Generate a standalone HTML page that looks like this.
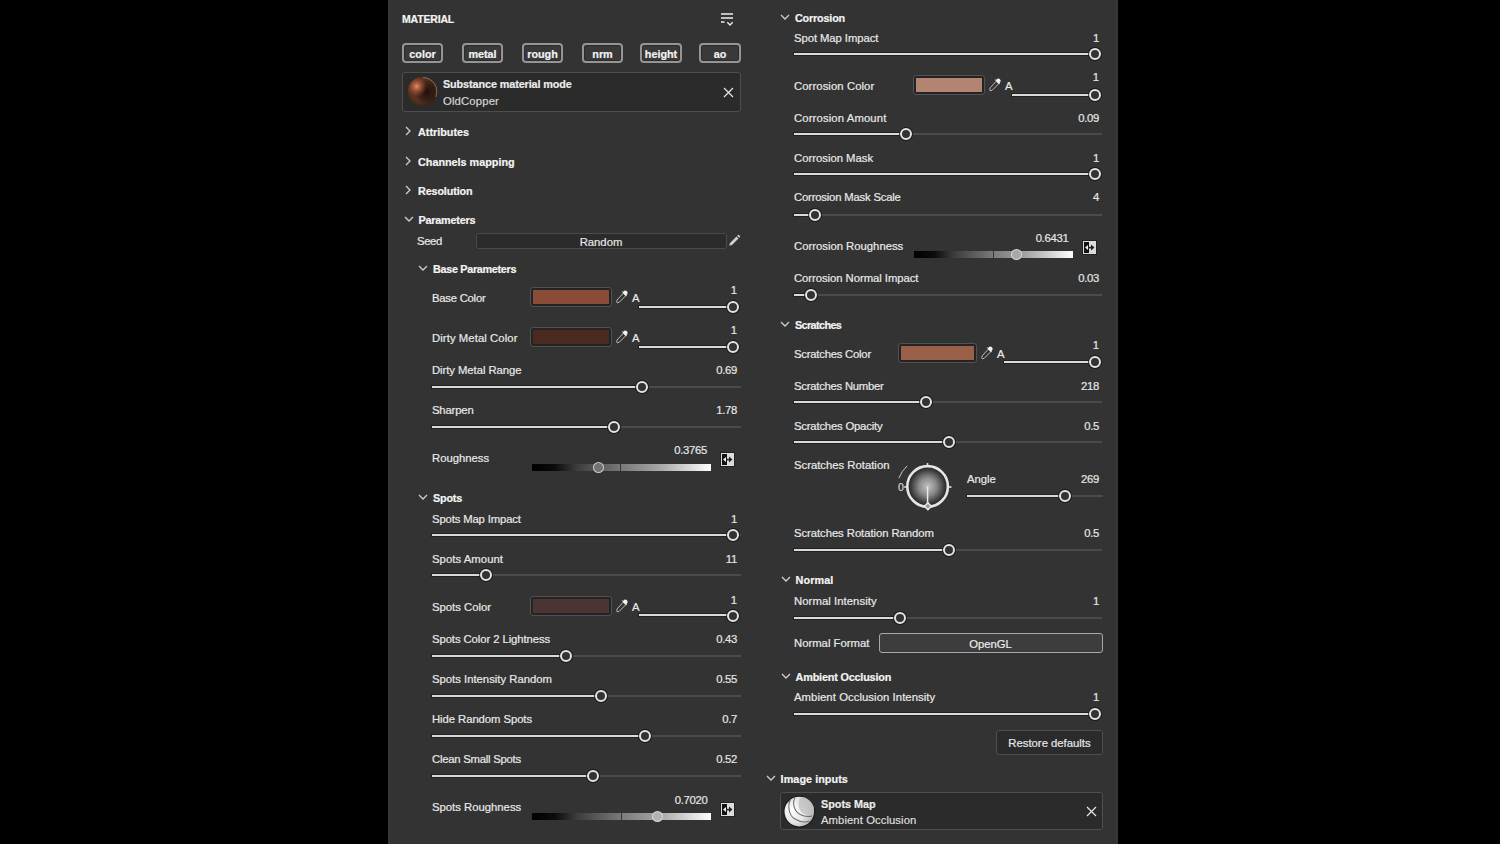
<!DOCTYPE html>
<html><head><meta charset="utf-8"><title>Material</title>
<style>
html,body{margin:0;padding:0;background:#000;width:1500px;height:844px;overflow:hidden}
#p{position:absolute;left:388px;top:0;width:730px;height:844px;background:#333333}
#p:before{content:"";position:absolute;left:1px;top:0;width:1px;height:844px;background:#393939}
#p:after{content:"";position:absolute;left:728px;top:0;width:1px;height:844px;background:#393939}
.t{position:absolute;white-space:nowrap;line-height:20px;font-family:"Liberation Sans",sans-serif;-webkit-text-stroke:0.2px currentColor}
.a{position:absolute}
.knob{position:absolute;width:12px;height:12px;border-radius:50%;box-sizing:border-box;border:2px solid #e4e4e4;background:#333;box-shadow:0 0 0 1px rgba(20,20,20,0.8)}
.sw{position:absolute;box-sizing:border-box;border:1px solid #525252;border-radius:3px;background:#242424}
.btn{position:absolute;box-sizing:border-box;border:2px solid #959595;border-radius:4px;background:#393939;box-shadow:inset 0 0 0 1px #2c2c2c}
.card{position:absolute;box-sizing:border-box;border:1px solid #4e4e4e;border-radius:3px;background:#2b2b2b}
.field{position:absolute;box-sizing:border-box;border:1px solid #4a4a4a;border-radius:3px;background:#2b2b2b}
.dd{position:absolute;box-sizing:border-box;border:1.5px solid #a8a8a8;border-radius:3px;background:#3d3d3d}
</style></head><body>
<div id="p"></div>
<div class="t" style="left:402px;top:9px;font-size:10.5px;font-weight:700;color:#f4f4f4;letter-spacing:-0.171px;">MATERIAL</div>
<svg class="a" style="left:719px;top:11px" width="16" height="16" viewBox="0 0 16 16"><path d="M2 3 H14 M2 7 H14 M2 11 H5.5" stroke="#eee" stroke-width="1.6"/><path d="M8.3 11.2 L11 13.9 L13.7 11.2" fill="none" stroke="#eee" stroke-width="1.4"/></svg>
<div class="btn" style="left:402px;top:43px;width:41px;height:20px"></div>
<div class="t" style="left:322.5px;width:200px;top:44px;font-size:10.8px;font-weight:700;color:#f2f2f2;text-align:center;">color</div>
<div class="btn" style="left:462px;top:43px;width:41px;height:20px"></div>
<div class="t" style="left:382.5px;width:200px;top:44px;font-size:10.8px;font-weight:700;color:#f2f2f2;text-align:center;">metal</div>
<div class="btn" style="left:522px;top:43px;width:41px;height:20px"></div>
<div class="t" style="left:442.5px;width:200px;top:44px;font-size:10.8px;font-weight:700;color:#f2f2f2;text-align:center;">rough</div>
<div class="btn" style="left:582px;top:43px;width:41px;height:20px"></div>
<div class="t" style="left:502.5px;width:200px;top:44px;font-size:10.8px;font-weight:700;color:#f2f2f2;text-align:center;">nrm</div>
<div class="btn" style="left:640px;top:43px;width:42px;height:20px"></div>
<div class="t" style="left:561.0px;width:200px;top:44px;font-size:10.8px;font-weight:700;color:#f2f2f2;text-align:center;">height</div>
<div class="btn" style="left:699px;top:43px;width:42px;height:20px"></div>
<div class="t" style="left:620.0px;width:200px;top:44px;font-size:10.8px;font-weight:700;color:#f2f2f2;text-align:center;">ao</div>
<div class="card" style="left:402px;top:72px;width:339px;height:40px"></div>
<svg class="a" style="left:406px;top:75px" width="33" height="33" viewBox="0 0 33 33"><defs><radialGradient id="cu1" cx="0.4" cy="0.45" r="0.6"><stop offset="0" stop-color="#6e3a28"/><stop offset="0.7" stop-color="#52301f"/><stop offset="1" stop-color="#3a2016"/></radialGradient><radialGradient id="cu2" cx="0.3" cy="0.33" r="0.36"><stop offset="0" stop-color="#e88a6a" stop-opacity="1"/><stop offset="0.45" stop-color="#a85a3c" stop-opacity="0.75"/><stop offset="1" stop-color="#8a4028" stop-opacity="0"/></radialGradient><radialGradient id="cu3" cx="0.64" cy="0.52" r="0.42"><stop offset="0" stop-color="#1e0e0a" stop-opacity="0.95"/><stop offset="0.6" stop-color="#24120c" stop-opacity="0.6"/><stop offset="1" stop-color="#1e0e0a" stop-opacity="0"/></radialGradient></defs><circle cx="16.5" cy="16.3" r="14.5" fill="url(#cu1)"/><circle cx="16.5" cy="16.3" r="14.5" fill="url(#cu3)"/><circle cx="16.5" cy="16.3" r="14.5" fill="url(#cu2)"/><path d="M17 2.6 A13.7 13.7 0 0 1 29.5 22" fill="none" stroke="#c89888" stroke-width="1" stroke-opacity="0.6"/></svg>
<div class="t" style="left:443px;top:74px;font-size:10.8px;font-weight:700;color:#ececec;letter-spacing:-0.09px;">Substance material mode</div>
<div class="t" style="left:443px;top:91px;font-size:11.3px;font-weight:400;color:#d6d6d6;letter-spacing:0.15px;">OldCopper</div>
<svg class="a" style="left:723.0px;top:86.5px" width="11" height="11" viewBox="0 0 11 11"><path d="M1 1 L10 10 M10 1 L1 10" stroke="#e6e6e6" stroke-width="1.2"/></svg>
<svg class="a" style="left:405px;top:126px" width="8" height="10" viewBox="0 0 8 10"><path d="M1 1 L5 5 L1 9" fill="none" stroke="#cfcfcf" stroke-width="1.3"/></svg>
<div class="t" style="left:418px;top:122px;font-size:10.8px;font-weight:700;color:#f4f4f4;">Attributes</div>
<svg class="a" style="left:405px;top:156px" width="8" height="10" viewBox="0 0 8 10"><path d="M1 1 L5 5 L1 9" fill="none" stroke="#cfcfcf" stroke-width="1.3"/></svg>
<div class="t" style="left:418px;top:152px;font-size:10.8px;font-weight:700;color:#f4f4f4;">Channels mapping</div>
<svg class="a" style="left:405px;top:185px" width="8" height="10" viewBox="0 0 8 10"><path d="M1 1 L5 5 L1 9" fill="none" stroke="#cfcfcf" stroke-width="1.3"/></svg>
<div class="t" style="left:418px;top:181px;font-size:10.8px;font-weight:700;color:#f4f4f4;letter-spacing:-0.133px;">Resolution</div>
<svg class="a" style="left:403.5px;top:216px" width="10" height="7" viewBox="0 0 10 7"><path d="M1 1 L5 5 L9 1" fill="none" stroke="#cfcfcf" stroke-width="1.3"/></svg>
<div class="t" style="left:418.5px;top:210px;font-size:10.8px;font-weight:700;color:#f4f4f4;letter-spacing:-0.2px;">Parameters</div>
<div class="t" style="left:417px;top:231px;font-size:11.3px;font-weight:400;color:#e9e9e9;letter-spacing:-0.4px;">Seed</div>
<div class="field" style="left:476px;top:233px;width:251px;height:16px"></div>
<div class="t" style="left:501px;width:200px;top:232px;font-size:11.3px;font-weight:400;color:#e6e6e6;text-align:center;">Random</div>
<svg class="a" style="left:727px;top:234px" width="14" height="14" viewBox="0 0 14 14"><path d="M3 9 L9.5 2.5 L11.5 4.5 L5 11 L2.3 11.7 Z" fill="#d0d0d0"/><path d="M10.2 1.8 L11 1 Q11.6 0.6 12.2 1.2 L12.8 1.8 Q13.3 2.4 12.9 3 L12.2 3.8 Z" fill="#d0d0d0"/></svg>
<svg class="a" style="left:418px;top:265px" width="10" height="7" viewBox="0 0 10 7"><path d="M1 1 L5 5 L9 1" fill="none" stroke="#cfcfcf" stroke-width="1.3"/></svg>
<div class="t" style="left:433px;top:259px;font-size:10.8px;font-weight:700;color:#f4f4f4;letter-spacing:-0.3px;">Base Parameters</div>
<div class="t" style="left:432px;top:288px;font-size:11.3px;font-weight:400;color:#e9e9e9;letter-spacing:-0.244px;">Base Color</div>
<div class="sw" style="left:530px;top:287px;width:82px;height:20px"><div style="position:absolute;left:2px;top:2px;right:2px;bottom:2px;background:#8a4c36"></div></div>
<svg class="a" style="left:615px;top:290px" width="14" height="14" viewBox="0 0 14 14"><path d="M8.2 3.3 L10.7 5.8 L4.2 12.3 L2.2 12.8 L1.7 11.8 L2.2 9.8 Z" fill="none" stroke="#bdbdbd" stroke-width="1"/><path d="M7.5 2.6 L9.3 0.8 Q10.6 0 11.9 1.3 Q13.2 2.6 12.4 3.9 L11.4 4.9 L12 5.5 L11.2 6.3 L6.7 1.8 L7.5 1 Z" fill="#f2f2f2"/></svg>
<div class="t" style="left:632px;top:288px;font-size:11.3px;font-weight:400;color:#e9e9e9;">A</div>
<div class="a" style="left:639px;top:306px;width:94px;height:2px;background:#dadada;box-shadow:0 0 0 1px rgba(0,0,0,0.35);"></div>
<div class="knob" style="left:727.0px;top:300.7px"></div>
<div class="t" style="right:763px;top:280px;font-size:11.3px;font-weight:400;color:#e6e6e6;text-align:right;">1</div>
<div class="t" style="left:432px;top:328px;font-size:11.3px;font-weight:400;color:#e9e9e9;letter-spacing:0.081px;">Dirty Metal Color</div>
<div class="sw" style="left:530px;top:327px;width:82px;height:20px"><div style="position:absolute;left:2px;top:2px;right:2px;bottom:2px;background:#4a2a20"></div></div>
<svg class="a" style="left:615px;top:330px" width="14" height="14" viewBox="0 0 14 14"><path d="M8.2 3.3 L10.7 5.8 L4.2 12.3 L2.2 12.8 L1.7 11.8 L2.2 9.8 Z" fill="none" stroke="#bdbdbd" stroke-width="1"/><path d="M7.5 2.6 L9.3 0.8 Q10.6 0 11.9 1.3 Q13.2 2.6 12.4 3.9 L11.4 4.9 L12 5.5 L11.2 6.3 L6.7 1.8 L7.5 1 Z" fill="#f2f2f2"/></svg>
<div class="t" style="left:632px;top:328px;font-size:11.3px;font-weight:400;color:#e9e9e9;">A</div>
<div class="a" style="left:639px;top:346px;width:94px;height:2px;background:#dadada;box-shadow:0 0 0 1px rgba(0,0,0,0.35);"></div>
<div class="knob" style="left:727.0px;top:340.7px"></div>
<div class="t" style="right:763px;top:320px;font-size:11.3px;font-weight:400;color:#e6e6e6;text-align:right;">1</div>
<div class="t" style="left:432px;top:360px;font-size:11.3px;font-weight:400;color:#e9e9e9;letter-spacing:-0.056px;">Dirty Metal Range</div>
<div class="t" style="right:763px;top:360px;font-size:11.3px;font-weight:400;color:#e6e6e6;text-align:right;letter-spacing:-0.3px">0.69</div>
<div class="a" style="left:432px;top:386px;width:210px;height:2px;background:#dadada;box-shadow:0 0 0 1px rgba(0,0,0,0.35);"></div>
<div class="a" style="left:642px;top:386px;width:99px;height:2px;background:#4b4b4b;"></div>
<div class="knob" style="left:635.8px;top:380.9px"></div>
<div class="t" style="left:432px;top:400px;font-size:11.3px;font-weight:400;color:#e9e9e9;letter-spacing:-0.167px;">Sharpen</div>
<div class="t" style="right:763px;top:400px;font-size:11.3px;font-weight:400;color:#e6e6e6;text-align:right;letter-spacing:-0.3px">1.78</div>
<div class="a" style="left:432px;top:426px;width:182px;height:2px;background:#dadada;box-shadow:0 0 0 1px rgba(0,0,0,0.35);"></div>
<div class="a" style="left:614px;top:426px;width:127px;height:2px;background:#4b4b4b;"></div>
<div class="knob" style="left:608.3px;top:421.0px"></div>
<div class="t" style="left:432px;top:448px;font-size:11.3px;font-weight:400;color:#e9e9e9;">Roughness</div>
<div class="a" style="left:532px;top:464px;width:179px;height:7px;background:linear-gradient(90deg,#000 0%,#0c0c0c 13%,#3c3c3c 25%,#7a7a7a 50%,#a8a8a8 72%,#fff 100%)"></div>
<div class="a" style="left:620px;top:464px;width:1px;height:7px;background:rgba(40,40,40,0.8)"></div>
<div class="a" style="left:593.0px;top:462.0px;width:11px;height:11px;border-radius:50%;box-sizing:border-box;border:1.5px solid rgba(225,225,225,0.8);background:rgb(114,114,114)"></div>
<div class="t" style="right:793px;top:440px;font-size:11.3px;font-weight:400;color:#e6e6e6;text-align:right;letter-spacing:-0.3px">0.3765</div>
<svg class="a" style="left:719.5px;top:452px" width="15" height="15" viewBox="0 0 15 15"><rect x="0.5" y="0.5" width="14" height="14" fill="#dcdcdc" stroke="#222" stroke-width="1"/><rect x="2" y="2" width="5" height="11" fill="#111"/><path d="M3 7.5 L6 5 L6 10 Z" fill="#eee"/><path d="M12.5 7.5 L9 4.5 L9 10.5 Z" fill="#222"/><rect x="6" y="6.8" width="4" height="1.6" fill="#222"/></svg>
<svg class="a" style="left:418px;top:494px" width="10" height="7" viewBox="0 0 10 7"><path d="M1 1 L5 5 L9 1" fill="none" stroke="#cfcfcf" stroke-width="1.3"/></svg>
<div class="t" style="left:433px;top:488px;font-size:10.8px;font-weight:700;color:#f4f4f4;letter-spacing:-0.2px;">Spots</div>
<div class="t" style="left:432px;top:509px;font-size:11.3px;font-weight:400;color:#e9e9e9;letter-spacing:-0.14px;">Spots Map Impact</div>
<div class="t" style="right:763px;top:509px;font-size:11.3px;font-weight:400;color:#e6e6e6;text-align:right;letter-spacing:-0.3px">1</div>
<div class="a" style="left:432px;top:534px;width:301px;height:2px;background:#dadada;box-shadow:0 0 0 1px rgba(0,0,0,0.35);"></div>
<div class="a" style="left:733px;top:534px;width:8px;height:2px;background:#4b4b4b;"></div>
<div class="knob" style="left:727.0px;top:529.2px"></div>
<div class="t" style="left:432px;top:549px;font-size:11.3px;font-weight:400;color:#e9e9e9;letter-spacing:0.06px;">Spots Amount</div>
<div class="t" style="right:763px;top:549px;font-size:11.3px;font-weight:400;color:#e6e6e6;text-align:right;letter-spacing:-0.3px">11</div>
<div class="a" style="left:432px;top:574px;width:54px;height:2px;background:#dadada;box-shadow:0 0 0 1px rgba(0,0,0,0.35);"></div>
<div class="a" style="left:486px;top:574px;width:255px;height:2px;background:#4b4b4b;"></div>
<div class="knob" style="left:479.8px;top:569.4px"></div>
<div class="t" style="left:432px;top:597px;font-size:11.3px;font-weight:400;color:#e9e9e9;">Spots Color</div>
<div class="sw" style="left:530px;top:596px;width:82px;height:20px"><div style="position:absolute;left:2px;top:2px;right:2px;bottom:2px;background:#4a3533"></div></div>
<svg class="a" style="left:615px;top:599px" width="14" height="14" viewBox="0 0 14 14"><path d="M8.2 3.3 L10.7 5.8 L4.2 12.3 L2.2 12.8 L1.7 11.8 L2.2 9.8 Z" fill="none" stroke="#bdbdbd" stroke-width="1"/><path d="M7.5 2.6 L9.3 0.8 Q10.6 0 11.9 1.3 Q13.2 2.6 12.4 3.9 L11.4 4.9 L12 5.5 L11.2 6.3 L6.7 1.8 L7.5 1 Z" fill="#f2f2f2"/></svg>
<div class="t" style="left:632px;top:597px;font-size:11.3px;font-weight:400;color:#e9e9e9;">A</div>
<div class="a" style="left:639px;top:614px;width:94px;height:2px;background:#dadada;box-shadow:0 0 0 1px rgba(0,0,0,0.35);"></div>
<div class="knob" style="left:727.0px;top:609.5px"></div>
<div class="t" style="right:763px;top:590px;font-size:11.3px;font-weight:400;color:#e6e6e6;text-align:right;">1</div>
<div class="t" style="left:432px;top:629px;font-size:11.3px;font-weight:400;color:#e9e9e9;letter-spacing:-0.082px;">Spots Color 2 Lightness</div>
<div class="t" style="right:763px;top:629px;font-size:11.3px;font-weight:400;color:#e6e6e6;text-align:right;letter-spacing:-0.3px">0.43</div>
<div class="a" style="left:432px;top:655px;width:134px;height:2px;background:#dadada;box-shadow:0 0 0 1px rgba(0,0,0,0.35);"></div>
<div class="a" style="left:566px;top:655px;width:175px;height:2px;background:#4b4b4b;"></div>
<div class="knob" style="left:559.6px;top:649.7px"></div>
<div class="t" style="left:432px;top:669px;font-size:11.3px;font-weight:400;color:#e9e9e9;">Spots Intensity Random</div>
<div class="t" style="right:763px;top:669px;font-size:11.3px;font-weight:400;color:#e6e6e6;text-align:right;letter-spacing:-0.3px">0.55</div>
<div class="a" style="left:432px;top:695px;width:169px;height:2px;background:#dadada;box-shadow:0 0 0 1px rgba(0,0,0,0.35);"></div>
<div class="a" style="left:601px;top:695px;width:140px;height:2px;background:#4b4b4b;"></div>
<div class="knob" style="left:594.7px;top:690.0px"></div>
<div class="t" style="left:432px;top:709px;font-size:11.3px;font-weight:400;color:#e9e9e9;letter-spacing:-0.0625px;">Hide Random Spots</div>
<div class="t" style="right:763px;top:709px;font-size:11.3px;font-weight:400;color:#e6e6e6;text-align:right;letter-spacing:-0.3px">0.7</div>
<div class="a" style="left:432px;top:735px;width:213px;height:2px;background:#dadada;box-shadow:0 0 0 1px rgba(0,0,0,0.35);"></div>
<div class="a" style="left:645px;top:735px;width:96px;height:2px;background:#4b4b4b;"></div>
<div class="knob" style="left:638.7px;top:729.8px"></div>
<div class="t" style="left:432px;top:749px;font-size:11.3px;font-weight:400;color:#e9e9e9;letter-spacing:-0.2375px;">Clean Small Spots</div>
<div class="t" style="right:763px;top:749px;font-size:11.3px;font-weight:400;color:#e6e6e6;text-align:right;letter-spacing:-0.3px">0.52</div>
<div class="a" style="left:432px;top:775px;width:161px;height:2px;background:#dadada;box-shadow:0 0 0 1px rgba(0,0,0,0.35);"></div>
<div class="a" style="left:593px;top:775px;width:148px;height:2px;background:#4b4b4b;"></div>
<div class="knob" style="left:586.9px;top:770.0px"></div>
<div class="t" style="left:432px;top:797px;font-size:11.3px;font-weight:400;color:#e9e9e9;">Spots Roughness</div>
<div class="a" style="left:532px;top:813px;width:179px;height:7px;background:linear-gradient(90deg,#000 0%,#0c0c0c 13%,#3c3c3c 25%,#7a7a7a 50%,#a8a8a8 72%,#fff 100%)"></div>
<div class="a" style="left:621px;top:813px;width:1px;height:7px;background:rgba(40,40,40,0.8)"></div>
<div class="a" style="left:651.7px;top:811.0px;width:11px;height:11px;border-radius:50%;box-sizing:border-box;border:1.5px solid rgba(225,225,225,0.8);background:rgb(179,179,179)"></div>
<div class="t" style="right:792.5px;top:790px;font-size:11.3px;font-weight:400;color:#e6e6e6;text-align:right;letter-spacing:-0.3px">0.7020</div>
<svg class="a" style="left:720px;top:802px" width="15" height="15" viewBox="0 0 15 15"><rect x="0.5" y="0.5" width="14" height="14" fill="#dcdcdc" stroke="#222" stroke-width="1"/><rect x="2" y="2" width="5" height="11" fill="#111"/><path d="M3 7.5 L6 5 L6 10 Z" fill="#eee"/><path d="M12.5 7.5 L9 4.5 L9 10.5 Z" fill="#222"/><rect x="6" y="6.8" width="4" height="1.6" fill="#222"/></svg>
<svg class="a" style="left:780px;top:14px" width="10" height="7" viewBox="0 0 10 7"><path d="M1 1 L5 5 L9 1" fill="none" stroke="#cfcfcf" stroke-width="1.3"/></svg>
<div class="t" style="left:795px;top:8px;font-size:10.8px;font-weight:700;color:#f4f4f4;letter-spacing:-0.175px;">Corrosion</div>
<div class="t" style="left:794px;top:28px;font-size:11.3px;font-weight:400;color:#e9e9e9;letter-spacing:-0.071px;">Spot Map Impact</div>
<div class="t" style="right:401px;top:28px;font-size:11.3px;font-weight:400;color:#e6e6e6;text-align:right;letter-spacing:-0.3px">1</div>
<div class="a" style="left:794px;top:53px;width:301px;height:2px;background:#dadada;box-shadow:0 0 0 1px rgba(0,0,0,0.35);"></div>
<div class="a" style="left:1095px;top:53px;width:7px;height:2px;background:#4b4b4b;"></div>
<div class="knob" style="left:1088.6px;top:48.4px"></div>
<div class="t" style="left:794px;top:76px;font-size:11.3px;font-weight:400;color:#e9e9e9;letter-spacing:0.079px;">Corrosion Color</div>
<div class="sw" style="left:913px;top:75px;width:72px;height:20px"><div style="position:absolute;left:2px;top:2px;right:2px;bottom:2px;background:#b38472"></div></div>
<svg class="a" style="left:988px;top:78px" width="14" height="14" viewBox="0 0 14 14"><path d="M8.2 3.3 L10.7 5.8 L4.2 12.3 L2.2 12.8 L1.7 11.8 L2.2 9.8 Z" fill="none" stroke="#bdbdbd" stroke-width="1"/><path d="M7.5 2.6 L9.3 0.8 Q10.6 0 11.9 1.3 Q13.2 2.6 12.4 3.9 L11.4 4.9 L12 5.5 L11.2 6.3 L6.7 1.8 L7.5 1 Z" fill="#f2f2f2"/></svg>
<div class="t" style="left:1005px;top:76px;font-size:11.3px;font-weight:400;color:#e9e9e9;">A</div>
<div class="a" style="left:1012px;top:94px;width:83px;height:2px;background:#dadada;box-shadow:0 0 0 1px rgba(0,0,0,0.35);"></div>
<div class="knob" style="left:1088.6px;top:88.5px"></div>
<div class="t" style="right:401px;top:67px;font-size:11.3px;font-weight:400;color:#e6e6e6;text-align:right;">1</div>
<div class="t" style="left:794px;top:108px;font-size:11.3px;font-weight:400;color:#e9e9e9;letter-spacing:0.127px;">Corrosion Amount</div>
<div class="t" style="right:401px;top:108px;font-size:11.3px;font-weight:400;color:#e6e6e6;text-align:right;letter-spacing:-0.3px">0.09</div>
<div class="a" style="left:794px;top:133px;width:112px;height:2px;background:#dadada;box-shadow:0 0 0 1px rgba(0,0,0,0.35);"></div>
<div class="a" style="left:906px;top:133px;width:196px;height:2px;background:#4b4b4b;"></div>
<div class="knob" style="left:900.3px;top:128.3px"></div>
<div class="t" style="left:794px;top:148px;font-size:11.3px;font-weight:400;color:#e9e9e9;">Corrosion Mask</div>
<div class="t" style="right:401px;top:148px;font-size:11.3px;font-weight:400;color:#e6e6e6;text-align:right;letter-spacing:-0.3px">1</div>
<div class="a" style="left:794px;top:173px;width:301px;height:2px;background:#dadada;box-shadow:0 0 0 1px rgba(0,0,0,0.35);"></div>
<div class="a" style="left:1095px;top:173px;width:7px;height:2px;background:#4b4b4b;"></div>
<div class="knob" style="left:1088.6px;top:168.2px"></div>
<div class="t" style="left:794px;top:187px;font-size:11.3px;font-weight:400;color:#e9e9e9;letter-spacing:-0.19px;">Corrosion Mask Scale</div>
<div class="t" style="right:401px;top:187px;font-size:11.3px;font-weight:400;color:#e6e6e6;text-align:right;letter-spacing:-0.3px">4</div>
<div class="a" style="left:794px;top:214px;width:21px;height:2px;background:#dadada;box-shadow:0 0 0 1px rgba(0,0,0,0.35);"></div>
<div class="a" style="left:815px;top:214px;width:287px;height:2px;background:#4b4b4b;"></div>
<div class="knob" style="left:809.2px;top:208.5px"></div>
<div class="t" style="left:794px;top:236px;font-size:11.3px;font-weight:400;color:#e9e9e9;">Corrosion Roughness</div>
<div class="a" style="left:914px;top:251px;width:159px;height:7px;background:linear-gradient(90deg,#000 0%,#0c0c0c 13%,#3c3c3c 25%,#7a7a7a 50%,#a8a8a8 72%,#fff 100%)"></div>
<div class="a" style="left:993px;top:251px;width:1px;height:7px;background:rgba(40,40,40,0.8)"></div>
<div class="a" style="left:1011.0px;top:249.0px;width:11px;height:11px;border-radius:50%;box-sizing:border-box;border:1.5px solid rgba(225,225,225,0.8);background:rgb(168,168,168)"></div>
<div class="t" style="right:431.5999999999999px;top:228px;font-size:11.3px;font-weight:400;color:#e6e6e6;text-align:right;letter-spacing:-0.3px">0.6431</div>
<svg class="a" style="left:1082px;top:240px" width="15" height="15" viewBox="0 0 15 15"><rect x="0.5" y="0.5" width="14" height="14" fill="#dcdcdc" stroke="#222" stroke-width="1"/><rect x="2" y="2" width="5" height="11" fill="#111"/><path d="M3 7.5 L6 5 L6 10 Z" fill="#eee"/><path d="M12.5 7.5 L9 4.5 L9 10.5 Z" fill="#222"/><rect x="6" y="6.8" width="4" height="1.6" fill="#222"/></svg>
<div class="t" style="left:794px;top:268px;font-size:11.3px;font-weight:400;color:#e9e9e9;letter-spacing:-0.05px;">Corrosion Normal Impact</div>
<div class="t" style="right:401px;top:268px;font-size:11.3px;font-weight:400;color:#e6e6e6;text-align:right;letter-spacing:-0.3px">0.03</div>
<div class="a" style="left:794px;top:294px;width:17px;height:2px;background:#dadada;box-shadow:0 0 0 1px rgba(0,0,0,0.35);"></div>
<div class="a" style="left:811px;top:294px;width:291px;height:2px;background:#4b4b4b;"></div>
<div class="knob" style="left:804.6px;top:289.0px"></div>
<svg class="a" style="left:780px;top:321px" width="10" height="7" viewBox="0 0 10 7"><path d="M1 1 L5 5 L9 1" fill="none" stroke="#cfcfcf" stroke-width="1.3"/></svg>
<div class="t" style="left:795px;top:315px;font-size:10.8px;font-weight:700;color:#f4f4f4;letter-spacing:-0.6px;">Scratches</div>
<div class="t" style="left:794px;top:344px;font-size:11.3px;font-weight:400;color:#e9e9e9;letter-spacing:-0.229px;">Scratches Color</div>
<div class="sw" style="left:898px;top:343px;width:79px;height:20px"><div style="position:absolute;left:2px;top:2px;right:2px;bottom:2px;background:#9a5f48"></div></div>
<svg class="a" style="left:980px;top:346px" width="14" height="14" viewBox="0 0 14 14"><path d="M8.2 3.3 L10.7 5.8 L4.2 12.3 L2.2 12.8 L1.7 11.8 L2.2 9.8 Z" fill="none" stroke="#bdbdbd" stroke-width="1"/><path d="M7.5 2.6 L9.3 0.8 Q10.6 0 11.9 1.3 Q13.2 2.6 12.4 3.9 L11.4 4.9 L12 5.5 L11.2 6.3 L6.7 1.8 L7.5 1 Z" fill="#f2f2f2"/></svg>
<div class="t" style="left:997px;top:344px;font-size:11.3px;font-weight:400;color:#e9e9e9;">A</div>
<div class="a" style="left:1004px;top:361px;width:91px;height:2px;background:#dadada;box-shadow:0 0 0 1px rgba(0,0,0,0.35);"></div>
<div class="knob" style="left:1088.6px;top:356.4px"></div>
<div class="t" style="right:401px;top:335px;font-size:11.3px;font-weight:400;color:#e6e6e6;text-align:right;">1</div>
<div class="t" style="left:794px;top:376px;font-size:11.3px;font-weight:400;color:#e9e9e9;letter-spacing:-0.247px;">Scratches Number</div>
<div class="t" style="right:401px;top:376px;font-size:11.3px;font-weight:400;color:#e6e6e6;text-align:right;letter-spacing:-0.3px">218</div>
<div class="a" style="left:794px;top:401px;width:132px;height:2px;background:#dadada;box-shadow:0 0 0 1px rgba(0,0,0,0.35);"></div>
<div class="a" style="left:926px;top:401px;width:176px;height:2px;background:#4b4b4b;"></div>
<div class="knob" style="left:920.4px;top:396.4px"></div>
<div class="t" style="left:794px;top:416px;font-size:11.3px;font-weight:400;color:#e9e9e9;letter-spacing:-0.194px;">Scratches Opacity</div>
<div class="t" style="right:401px;top:416px;font-size:11.3px;font-weight:400;color:#e6e6e6;text-align:right;letter-spacing:-0.3px">0.5</div>
<div class="a" style="left:794px;top:441px;width:155px;height:2px;background:#dadada;box-shadow:0 0 0 1px rgba(0,0,0,0.35);"></div>
<div class="a" style="left:949px;top:441px;width:153px;height:2px;background:#4b4b4b;"></div>
<div class="knob" style="left:942.8px;top:436.4px"></div>
<div class="t" style="left:794px;top:455px;font-size:11.3px;font-weight:400;color:#e9e9e9;">Scratches Rotation</div>
<svg class="a" style="left:890px;top:455px" width="70" height="60" viewBox="0 0 70 60"><defs><radialGradient id="dg" cx="0.5" cy="0.5" r="0.5"><stop offset="0" stop-color="#c2c2c2"/><stop offset="0.45" stop-color="#8a8a8a"/><stop offset="0.85" stop-color="#3c3c3c"/><stop offset="1" stop-color="#262626"/></radialGradient></defs><circle cx="37.6" cy="31.4" r="19.5" fill="url(#dg)"/><circle cx="37.6" cy="31.4" r="20.3" fill="none" stroke="#e6e6e6" stroke-width="2.6"/><path d="M37.6 31.4 L37.6 49" stroke="#e8e8e8" stroke-width="1.5"/><path d="M37.9 47.6 L41.5 51.2 L37.9 54.8 L34.3 51.2 Z" fill="#a0a0a0" stroke="#eeeeee" stroke-width="1.3"/><path d="M37.5 8 V10.6" stroke="#dedede" stroke-width="1.6"/><path d="M58.8 32 H61.5" stroke="#dedede" stroke-width="1.6"/><path d="M14.2 32 H16.5" stroke="#dedede" stroke-width="1.6"/><path d="M8.8 23.2 Q12 15.5 17.2 10.8" fill="none" stroke="#c8c8c8" stroke-width="1"/></svg>
<div class="t" style="left:898px;top:477px;font-size:10.5px;font-weight:400;color:#d8d8d8;">0</div>
<div class="t" style="left:967px;top:469px;font-size:11.3px;font-weight:400;color:#e9e9e9;">Angle</div>
<div class="t" style="right:401px;top:469px;font-size:11.3px;font-weight:400;color:#e6e6e6;text-align:right;letter-spacing:-0.3px">269</div>
<div class="a" style="left:967px;top:495px;width:98px;height:2px;background:#dadada;box-shadow:0 0 0 1px rgba(0,0,0,0.35);"></div>
<div class="a" style="left:1065px;top:495px;width:38px;height:2px;background:#4b4b4b;"></div>
<div class="knob" style="left:1058.6px;top:489.8px"></div>
<div class="t" style="left:794px;top:523px;font-size:11.3px;font-weight:400;color:#e9e9e9;letter-spacing:-0.058px;">Scratches Rotation Random</div>
<div class="t" style="right:401px;top:523px;font-size:11.3px;font-weight:400;color:#e6e6e6;text-align:right;letter-spacing:-0.3px">0.5</div>
<div class="a" style="left:794px;top:549px;width:155px;height:2px;background:#dadada;box-shadow:0 0 0 1px rgba(0,0,0,0.35);"></div>
<div class="a" style="left:949px;top:549px;width:153px;height:2px;background:#4b4b4b;"></div>
<div class="knob" style="left:943.2px;top:544.2px"></div>
<svg class="a" style="left:780.6px;top:576px" width="10" height="7" viewBox="0 0 10 7"><path d="M1 1 L5 5 L9 1" fill="none" stroke="#cfcfcf" stroke-width="1.3"/></svg>
<div class="t" style="left:795.6px;top:570px;font-size:10.8px;font-weight:700;color:#f4f4f4;letter-spacing:0.1px;">Normal</div>
<div class="t" style="left:794px;top:591px;font-size:11.3px;font-weight:400;color:#e9e9e9;letter-spacing:0.067px;">Normal Intensity</div>
<div class="t" style="right:401px;top:591px;font-size:11.3px;font-weight:400;color:#e6e6e6;text-align:right;letter-spacing:-0.3px">1</div>
<div class="a" style="left:794px;top:617px;width:106px;height:2px;background:#dadada;box-shadow:0 0 0 1px rgba(0,0,0,0.35);"></div>
<div class="a" style="left:900px;top:617px;width:202px;height:2px;background:#4b4b4b;"></div>
<div class="knob" style="left:894.2px;top:611.7px"></div>
<div class="t" style="left:794px;top:633px;font-size:11.3px;font-weight:400;color:#e9e9e9;">Normal Format</div>
<div class="dd" style="left:879px;top:633px;width:224px;height:20px"></div>
<div class="t" style="left:890.5px;width:200px;top:634px;font-size:11.3px;font-weight:400;color:#ececec;text-align:center;">OpenGL</div>
<svg class="a" style="left:780.6px;top:673px" width="10" height="7" viewBox="0 0 10 7"><path d="M1 1 L5 5 L9 1" fill="none" stroke="#cfcfcf" stroke-width="1.3"/></svg>
<div class="t" style="left:795.6px;top:667px;font-size:10.8px;font-weight:700;color:#f4f4f4;letter-spacing:-0.169px;">Ambient Occlusion</div>
<div class="t" style="left:794px;top:687px;font-size:11.3px;font-weight:400;color:#e9e9e9;letter-spacing:0.07px;">Ambient Occlusion Intensity</div>
<div class="t" style="right:401px;top:687px;font-size:11.3px;font-weight:400;color:#e6e6e6;text-align:right;letter-spacing:-0.3px">1</div>
<div class="a" style="left:794px;top:713px;width:301px;height:2px;background:#dadada;box-shadow:0 0 0 1px rgba(0,0,0,0.35);"></div>
<div class="a" style="left:1095px;top:713px;width:7px;height:2px;background:#4b4b4b;"></div>
<div class="knob" style="left:1089.0px;top:707.7px"></div>
<div class="card" style="left:996px;top:730px;width:107px;height:25px"></div>
<div class="t" style="left:949.5px;width:200px;top:733px;font-size:11.3px;font-weight:400;color:#e6e6e6;text-align:center;">Restore defaults</div>
<svg class="a" style="left:765.6px;top:775px" width="10" height="7" viewBox="0 0 10 7"><path d="M1 1 L5 5 L9 1" fill="none" stroke="#cfcfcf" stroke-width="1.3"/></svg>
<div class="t" style="left:780.6px;top:769px;font-size:10.8px;font-weight:700;color:#f4f4f4;letter-spacing:0.06px;">Image inputs</div>
<div class="card" style="left:780px;top:792px;width:323px;height:38px"></div>
<svg class="a" style="left:781px;top:794px" width="38" height="36" viewBox="0 0 38 36"><defs><radialGradient id="ws" cx="0.3" cy="0.45" r="0.75"><stop offset="0" stop-color="#ffffff"/><stop offset="0.55" stop-color="#e4e4e4"/><stop offset="1" stop-color="#a8a8a8"/></radialGradient><clipPath id="wc"><circle cx="18.3" cy="17.6" r="15.2"/></clipPath></defs><circle cx="18.3" cy="17.6" r="15.4" fill="url(#ws)" stroke="#1c1c1c" stroke-width="1.2"/><g clip-path="url(#wc)"><path d="M18.8 4.3 C16 10 18 17 22.2 19.2 C25 21 28 21.5 31.5 21.3 L36 0 Z" fill="#bdbdbd" opacity="0.75"/><path d="M9.8 5.1 C6 12 8 22 14 25 C18 27.5 24 28.5 28.5 27.3" fill="none" stroke="#6e6e6e" stroke-width="1.1"/><path d="M14 3.8 C11 9 13 17 19.2 20.5 C23 22.5 27 23 31 22" fill="none" stroke="#707070" stroke-width="1.1"/></g></svg>
<div class="t" style="left:821px;top:794px;font-size:10.8px;font-weight:700;color:#ececec;">Spots Map</div>
<div class="t" style="left:821px;top:810px;font-size:11.3px;font-weight:400;color:#dedede;letter-spacing:0.07px;">Ambient Occlusion</div>
<svg class="a" style="left:1085.8px;top:806.3px" width="11" height="11" viewBox="0 0 11 11"><path d="M1 1 L10 10 M10 1 L1 10" stroke="#e6e6e6" stroke-width="1.2"/></svg>
</body></html>
